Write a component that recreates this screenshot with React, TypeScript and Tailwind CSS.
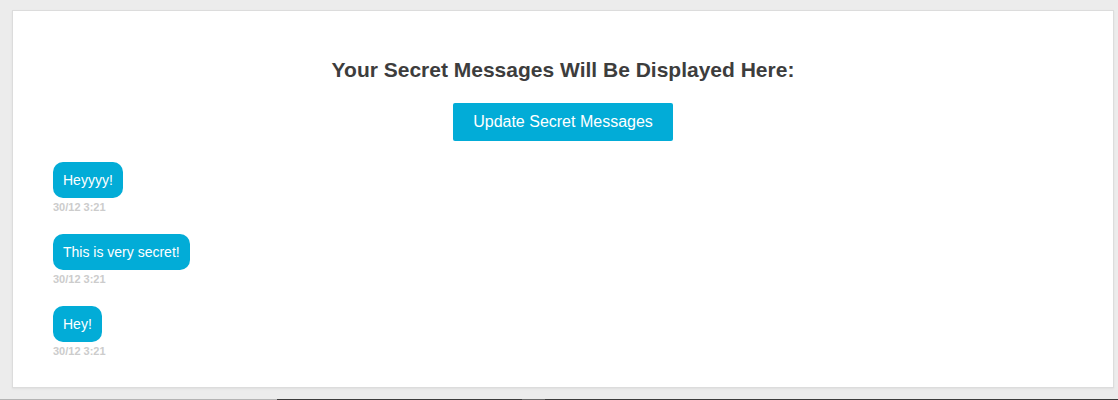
import React from "react";

const messages = [
  { text: "Heyyyy!", time: "30/12 3:21" },
  { text: "This is very secret!", time: "30/12 3:21" },
  { text: "Hey!", time: "30/12 3:21" },
];

export default function App() {
  return (
    <div className="w-[1118px] h-[400px] bg-[#ececec] flex flex-col font-['Liberation_Sans',Arial,sans-serif]">
      <div className="flex-1 pt-[10px] pl-[12px] pr-[4px] pb-[11px] flex">
        <div className="flex-1 bg-white border border-[#dcdcdc] shadow-[0_1px_2px_rgba(0,0,0,0.06)] pt-[47px] px-[40px]">
          <h1 className="text-center text-[21px] leading-[24px] font-bold text-[#3d3d3d]">
            Your Secret Messages Will Be Displayed Here:
          </h1>
          <div className="flex justify-center mt-[21px]">
            <button className="w-[220px] h-[38px] bg-[#02acd7] text-white text-[16px] rounded-[2px]">
              Update Secret Messages
            </button>
          </div>
          <div className="flex flex-col gap-[20px] mt-[21px]">
            {messages.map((m, i) => (
              <MessageItem key={i} text={m.text} time={m.time} />
            ))}
          </div>
        </div>
      </div>
      <div className="h-[1px] flex">
        <div className="w-[277px] bg-[#b4b4b4]" />
        <div className="w-[245px] bg-[#3c3c3c]" />
        <div className="w-[23px] bg-[#6a6a6a]" />
        <div className="flex-1 bg-[#3c3c3c]" />
      </div>
    </div>
  );
}

function MessageItem({ text, time }: { text: string; time: string }) {
  return (
    <div className="flex flex-col items-start">
      <span className="bg-[#02acd7] text-white text-[14px] leading-[16px] px-[10px] py-[10px] rounded-[10px]">
        {text}
      </span>
      <span className="text-[11px] leading-[14px] font-bold text-[#cccccc] mt-[2px]">
        {time}
      </span>
    </div>
  );
}
